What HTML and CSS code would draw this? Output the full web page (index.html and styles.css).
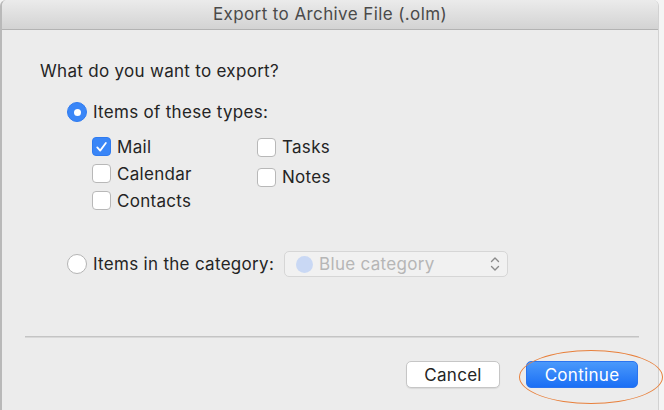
FILE: index.html
```html
<!DOCTYPE html>
<html lang="en">
<head>
<meta charset="utf-8">
<title>Export to Archive File (.olm)</title>
<link rel="stylesheet" href="styles.css">
</head>
<body>
<div class="window">
  <div class="titlebar">Export to Archive File (.olm)</div>
  <div class="content">
    <p class="question">What do you want to export?</p>
    <div class="radio-row">
      <span class="radio checked"></span>
      <span class="label">Items of these types:</span>
    </div>
    <div class="types">
      <div class="col col-left">
        <div class="check-row">
          <span class="checkbox checked">
            <svg viewBox="0 0 18 18" width="18" height="18"><polyline points="4.5,9.5 7.6,12.8 13.6,4.8" fill="none" stroke="#fff" stroke-width="1.9" stroke-linecap="round" stroke-linejoin="round"/></svg>
          </span>
          <span class="label">Mail</span>
        </div>
        <div class="check-row">
          <span class="checkbox"></span>
          <span class="label">Calendar</span>
        </div>
        <div class="check-row">
          <span class="checkbox"></span>
          <span class="label">Contacts</span>
        </div>
      </div>
      <div class="col col-right">
        <div class="check-row tall">
          <span class="checkbox"></span>
          <span class="label">Tasks</span>
        </div>
        <div class="check-row tall">
          <span class="checkbox"></span>
          <span class="label">Notes</span>
        </div>
      </div>
    </div>
    <div class="radio-row category-row">
      <span class="radio"></span>
      <span class="label">Items in the category:</span>
      <div class="popup">
        <span class="swatch"></span>
        <span class="popup-text">Blue category</span>
        <svg class="chevrons" viewBox="0 0 10 16" width="10" height="16"><polyline points="1.5,5.5 5,2 8.5,5.5" fill="none" stroke="#8a8a8a" stroke-width="1.4" stroke-linecap="round" stroke-linejoin="round"/><polyline points="1.5,10.5 5,14 8.5,10.5" fill="none" stroke="#8a8a8a" stroke-width="1.4" stroke-linecap="round" stroke-linejoin="round"/></svg>
      </div>
    </div>
  </div>
  <div class="separator"></div>
  <div class="buttons">
    <button class="btn btn-cancel">Cancel</button>
    <div class="primary-wrap">
      <button class="btn btn-primary">Continue</button>
      <span class="highlight"></span>
    </div>
  </div>
</div>
</body>
</html>
```
FILE: styles.css
```css
html, body {
  margin: 0;
  padding: 0;
  height: 100%;
  overflow: hidden;
}
body {
  background: #f4f4f4;
  font-family: Inter, "Liberation Sans", sans-serif;
  color: #242424;
  letter-spacing: 0.3px;
}
.window {
  width: 656px;
  height: 430px;
  background: #ececec;
  border-left: 2px solid #b9b9b9;
  border-right: 1px solid #d2d2d2;
  border-radius: 6px 6px 0 0;
  box-sizing: content-box;
}
.titlebar {
  height: 29px;
  line-height: 29px;
  text-align: center;
  font-size: 17px;
  letter-spacing: 0.4px;
  color: #4a4a4a;
  background: linear-gradient(#ebebeb, #d3d3d3);
  border-bottom: 1px solid #b3b3b3;
  border-radius: 6px 6px 0 0;
}
.content {
  padding-left: 38px;
}
.question {
  margin: 31px 0 0 0;
  font-size: 17px;
  line-height: 20px;
}
.radio-row {
  display: flex;
  align-items: center;
  margin-top: 20px;
  margin-left: 27px;
  height: 22px;
  font-size: 17px;
}
.radio {
  width: 20px;
  height: 20px;
  box-sizing: border-box;
  border-radius: 50%;
  background: #fff;
  border: 1px solid #b4b4b4;
  margin-right: 6px;
  display: flex;
  align-items: center;
  justify-content: center;
}
.radio.checked {
  background: #3a86f7;
  border-color: #2f7bf0;
}
.radio.checked::after {
  content: "";
  width: 7px;
  height: 7px;
  border-radius: 50%;
  background: #fff;
}
.types {
  display: flex;
  margin-left: 52px;
  margin-top: 10px;
}
.col-left {
  width: 165px;
}
.col-right {
  margin-top: -1px;
}
.check-row {
  display: flex;
  align-items: center;
  height: 27px;
  font-size: 17px;
}
.check-row.tall {
  height: 30px;
}
.checkbox {
  width: 19px;
  height: 19px;
  box-sizing: border-box;
  border-radius: 4px;
  background: #fff;
  border: 1px solid #b8b8b8;
  margin-right: 6px;
  display: flex;
  align-items: center;
  justify-content: center;
}
.checkbox.checked {
  background: #3a86f7;
  border-color: #2f7bf0;
}
.category-row {
  margin-top: 37px;
  height: 26px;
}
.popup {
  margin-left: 10px;
  width: 224px;
  height: 26px;
  box-sizing: border-box;
  border: 1px solid #d6d6d6;
  border-radius: 5px;
  background: #f1f1f1;
  display: flex;
  align-items: center;
  padding: 0 7px 0 11px;
}
.swatch {
  width: 17px;
  height: 17px;
  border-radius: 50%;
  background: #c9d8f4;
  margin-right: 6px;
}
.popup-text {
  flex: 1;
  color: #b6b6b6;
  font-size: 17px;
}
.chevrons {
  display: block;
}
.separator {
  margin: 59px 19px 0 23px;
  height: 1px;
  background: #c4c4c4;
  border-bottom: 1px solid #d8d8d8;
}
.buttons {
  display: flex;
  justify-content: flex-end;
  gap: 26px;
  margin-top: 23px;
  padding-right: 20px;
}
.btn {
  font-family: Inter, "Liberation Sans", sans-serif;
  font-size: 17px;
  letter-spacing: 0.3px;
  height: 27px;
  border-radius: 5px;
  padding: 0;
  margin: 0;
  cursor: default;
}
.btn-cancel {
  width: 94px;
  background: #fff;
  color: #242424;
  border: 1px solid #c6c6c6;
  box-shadow: 0 1px 1px rgba(0,0,0,0.08);
}
.primary-wrap {
  position: relative;
}
.btn-primary {
  width: 112px;
  color: #fff;
  border: 1px solid #2b74ef;
  background: linear-gradient(#4a99fb, #1b6ff5);
}
.highlight {
  position: absolute;
  left: -7px;
  top: -11px;
  width: 144px;
  height: 54px;
  box-sizing: border-box;
  border: 1.6px solid #e8803c;
  border-radius: 50%;
  pointer-events: none;
}
```
